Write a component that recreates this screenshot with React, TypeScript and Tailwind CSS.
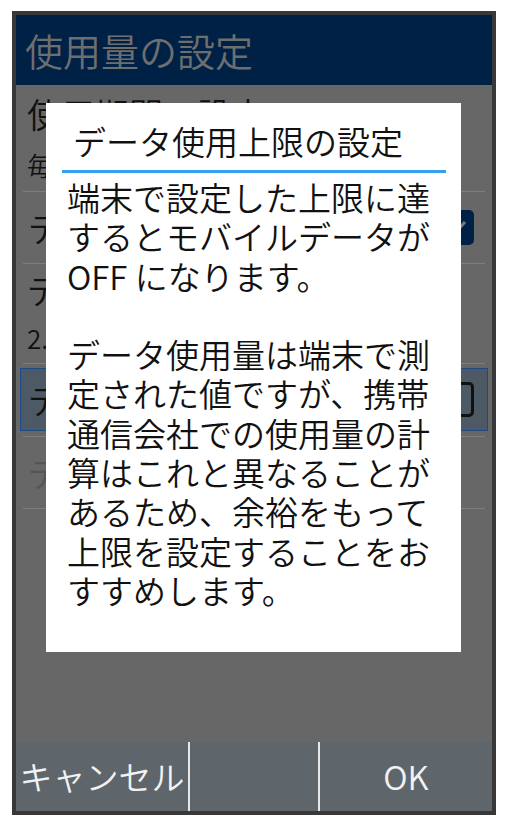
export default function App() {
  return (
    <div className="w-[507px] h-[826px] bg-white pt-[11px] pl-[12px] font-[350] font-['Noto_Sans_CJK_JP','Noto_Sans',sans-serif]">
      <div className="relative w-[484px] h-[804px] border-4 border-[#383838] flex flex-col">
        {/* Header */}
        <div className="h-[70px] bg-[#002146] flex items-center pl-[9px] text-[38px] leading-none text-[#6e6e6e]">
          使用量の設定
        </div>

        {/* Dimmed content */}
        <div className="flex-1 bg-[#676767] flex flex-col">
          {/* Row 1 */}
          <div className="h-[106px] pl-[11px] pt-[9px] flex flex-col">
            <div className="text-[34px] leading-[40px] text-[#111] whitespace-nowrap">使用期間の設定</div>
            <div className="mt-[15px] text-[26px] leading-[32px] text-[#111] whitespace-nowrap">毎月1日</div>
          </div>
          <div className="h-px mx-[7px] bg-[#7e7e7e]" />
          {/* Row 2 */}
          <div className="h-[71px] pl-[12px] pr-[18px] flex items-center justify-between">
            <div className="text-[34px] leading-[40px] text-[#111] whitespace-nowrap">データ使用量を制限</div>
            <div className="w-[34px] h-[35px] rounded-[5px] bg-[#002146] flex items-center justify-center">
              <svg width="24" height="24" viewBox="0 0 24 24">
                <path d="M4 13 L9 18 L20 6" fill="none" stroke="#7a7a7a" strokeWidth="3" />
              </svg>
            </div>
          </div>
          <div className="h-px mx-[7px] bg-[#7e7e7e]" />
          {/* Row 3 */}
          <div className="h-[99px] pl-[11px] pt-[6px] flex flex-col">
            <div className="text-[34px] leading-[40px] text-[#111] whitespace-nowrap">データ使用量の警告</div>
            <div className="mt-[12px] text-[26px] leading-[32px] text-[#111] whitespace-nowrap">2.0GB</div>
          </div>
          <div className="h-px mx-[7px] bg-[#7e7e7e]" />
          {/* Row 4 (selected) */}
          <div className="h-[72px] pt-[4px] pb-[5px] px-[4px] flex">
            <div className="flex-1 border-[1.5px] border-[#1c4a85] bg-[#4e5966] pl-[7px] pr-[13px] flex items-center justify-between">
              <div className="text-[34px] leading-[40px] text-[#111] whitespace-nowrap">データ使用上限</div>
              <div className="w-[34px] h-[35px] rounded-[5px] border-[3px] border-[#111]" />
            </div>
          </div>
          <div className="h-px mx-[7px] bg-[#7e7e7e]" />
          {/* Row 5 (disabled) */}
          <div className="h-[71px] pl-[12px] flex items-center">
            <div className="text-[34px] leading-[40px] text-[#555] whitespace-nowrap">データ使用上限値</div>
          </div>
          <div className="h-px mx-[7px] bg-[#7e7e7e]" />
        </div>

        {/* Bottom bar */}
        <div className="h-[69px] bg-[#5f666b] flex text-[33px] leading-none text-[#f2f2f2]">
          <div className="w-[172px] flex items-center justify-center">キャンセル</div>
          <div className="w-[2px] bg-[#e8e8e8]" />
          <div className="w-[128px]" />
          <div className="w-[2px] bg-[#e8e8e8]" />
          <div className="flex-1 flex items-center justify-center">OK</div>
        </div>

        {/* Dialog */}
        <div className="absolute left-[30px] top-[88px] w-[415px] h-[549px] bg-white flex flex-col">
          <div className="pt-[18px] pl-[27px] text-[33px] leading-[40px] text-[#111]">
            データ使用上限の設定
          </div>
          <div className="mt-[9px] ml-[16px] mr-[15px] h-[3px] bg-[#33a0f0]" />
          <div className="mt-[5px] pl-[21px] text-[33px] leading-[39.3px] text-[#111]">
            端末で設定した上限に達<br />
            するとモバイルデータが<br />
            OFF になります。<br />
            <br />
            データ使用量は端末で測<br />
            定された値ですが、携帯<br />
            通信会社での使用量の計<br />
            算はこれと異なることが<br />
            あるため、余裕をもって<br />
            上限を設定することをお<br />
            すすめします。
          </div>
        </div>
      </div>
    </div>
  );
}
